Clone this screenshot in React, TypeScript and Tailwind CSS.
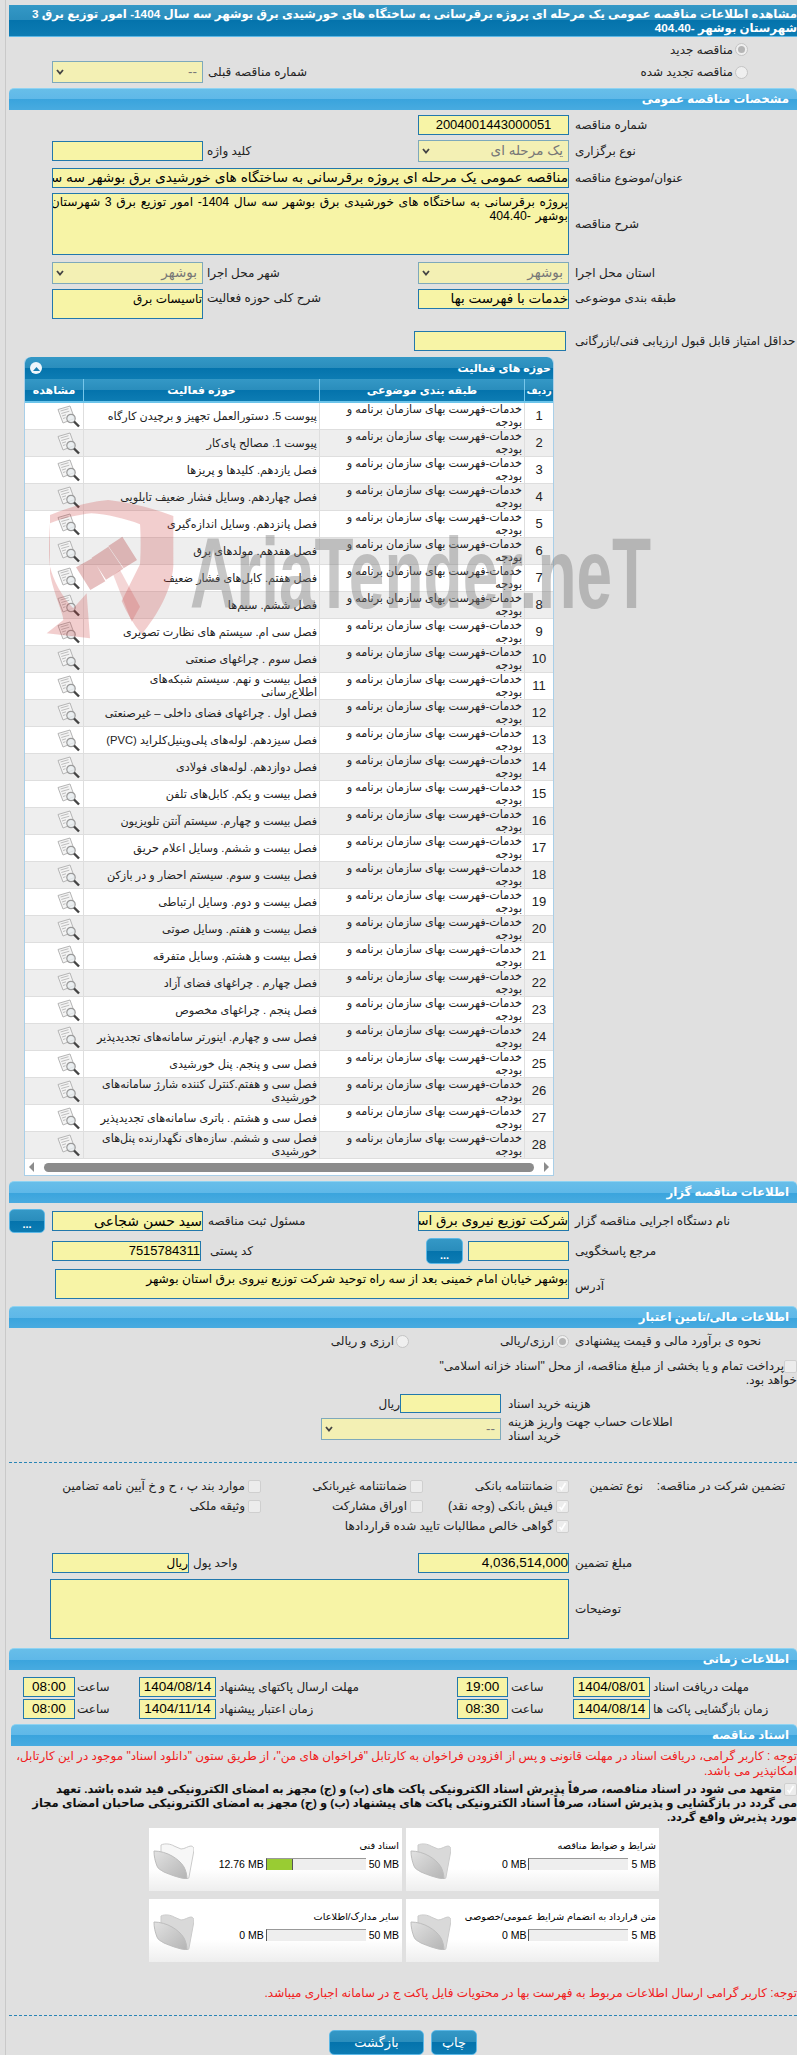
import React from "react";

const titleBg = "bg-[linear-gradient(#3498c6_0%,#2a8dbc_50%,#0473ac_50%,#0d7cb3_100%)]";
const sectionBg = "bg-[linear-gradient(#67bee9_0%,#5fb8e8_50%,#3aa4dd_50%,#48abe0_100%)]";

function Section({ children }: { children: React.ReactNode }) {
  return (
    <div className={`${sectionBg} h-[22px] rounded-t-[5px] border-t border-[#8fd3f2] pr-[8px] text-white font-bold text-[11.75px] leading-[20px]`}>
      {children}
    </div>
  );
}
function Field({ w, h = "h-[20px]", t = "text-[13.5px]", children, align = "" }: { w: string; h?: string; t?: string; children?: React.ReactNode; align?: string }) {
  return (
    <div className={`bg-[#f7f4a6] border border-[#2278ac] leading-[18px] text-black whitespace-nowrap overflow-hidden shrink-0 ${w} ${h} ${t} ${align}`}>
      {children}
    </div>
  );
}
function Chevron() {
  return (
    <svg width="8" height="6" viewBox="0 0 8 6" className="shrink-0">
      <path d="M1 1l3 3.5L7 1" fill="none" stroke="#444" strokeWidth="1.8" />
    </svg>
  );
}
function Select({ w, children }: { w: string; children?: React.ReactNode }) {
  return (
    <div className={`h-[22px] shrink-0 bg-[#f3f0b4] border border-[#7ea9bb] flex items-center justify-between pr-[5px] pl-[3px] text-[13.5px] text-[#777] ${w}`}>
      <span>{children}</span>
      <Chevron />
    </div>
  );
}
function Lbl({ w, children, pl = "pl-[6px]" }: { w: string; children?: React.ReactNode; pl?: string }) {
  return (
    <div className={`text-left text-[12px] leading-[14px] whitespace-nowrap shrink-0 text-[#222] ${w} ${pl}`}>
      {children}
    </div>
  );
}
function Radio({ checked }: { checked?: boolean }) {
  return (
    <span className="inline-flex w-[13px] h-[13px] rounded-full border border-[#c4c4c4] bg-[#efefef] items-center justify-center shrink-0">
      {checked && <span className="w-[7px] h-[7px] rounded-full bg-[#b5b5b5]" />}
    </span>
  );
}
function Check({ checked }: { checked?: boolean }) {
  return (
    <span className="inline-flex w-[13px] h-[13px] rounded-[2px] border border-[#cfcfcf] bg-[#ececec] items-center justify-center shrink-0">
      {checked && (
        <svg width="9" height="9" viewBox="0 0 9 9">
          <path d="M1.5 5l2 2.5L7.5 1" fill="none" stroke="#fff" strokeWidth="1.6" />
        </svg>
      )}
    </span>
  );
}
function Dots({ cls }: { cls: string }) {
  return (
    <div className={`${titleBg} border border-[#5db8e6] rounded-[5px] shrink-0 text-white font-bold text-[11px] flex items-end justify-center leading-[14px] pb-[1px] ${cls}`}>
      ...
    </div>
  );
}
function DocIcon() {
  return (
    <svg width="24" height="23" viewBox="0 0 24 23" className="shrink-0">
      <path d="M1 4.5L13 1l4.5 12.5L6 18z" fill="#f4f4f4" stroke="#b5b5b5" />
      <path d="M3.5 6l8-2.3M4.3 8.5l8-2.3M5 11l4-1.2M6 13.5l2.5-.8" stroke="#bdbdbd" fill="none" />
      <circle cx="14" cy="13.5" r="4.2" fill="#e9eef0" fillOpacity="0.8" stroke="#9a9a9a" strokeWidth="1.2" />
      <path d="M17 16.5l5 5" stroke="#444" strokeWidth="2.4" />
    </svg>
  );
}
function Folder({ open }: { open?: boolean }) {
  return (
    <svg width="41" height="36" viewBox="0 0 41 36" className="shrink-0">
      <defs>
        <linearGradient id="fg" x1="0" y1="0" x2="1" y2="1">
          <stop offset="0" stopColor="#e2e2e2" />
          <stop offset="1" stopColor="#b4b4b4" />
        </linearGradient>
      </defs>
      <path d="M8 2C12 0 18 1 21 3L28 6C32 6 35 3 38 3C40 3 41 5 41 7L36 34C36 36 34 36 33 35L8 20Z" fill={open ? "#f7f7f7" : "#d9d9d9"} stroke="#cbcbcb" />
      <path d="M1 8C7 8 14 10 19 13C24 16 28 19 31 24C33 28 34 32 34 36C26 35 18 32 11 29C8 27 5 26 4 23C2 18 1 13 1 8Z" fill="url(#fg)" stroke="#bdbdbd" />
    </svg>
  );
}
function Card({ title, used, max, pct, open }: { title: string; used: string; max: string; pct?: number; open?: boolean }) {
  return (
    <div className="h-[63px] bg-[linear-gradient(#ffffff_65%,#eeeeee_100%)] pr-[3px] pl-[4px] pt-[11px] flex justify-between">
      <div className="flex flex-col items-start flex-1 min-w-0">
        <div className="w-full text-right text-[9.75px] leading-[14px] text-black whitespace-nowrap">{title}</div>
        <div className="flex items-center mt-[5px] text-[10.5px] leading-[12px] text-black h-[12px] whitespace-nowrap">
          <span dir="ltr" className="ml-[3px]">{max}</span>
          <div className="w-[100px] h-[12px] bg-[#eeeeee] border-t border-l border-t-[#999] border-l-[#555] relative">
            {pct ? <div className="absolute left-0 top-0 bottom-0 bg-[#99cc33] border-r border-[#555]" style={{ width: pct + "%" }} /> : null}
          </div>
          <span dir="ltr" className="mr-[2px]">{used}</span>
        </div>
      </div>
      <div className="pt-[4px]">
        <Folder open={open} />
      </div>
    </div>
  );
}

const rows: string[][] = [
  ["پیوست 5. دستورالعمل تجهیز و برچیدن کارگاه"],
  ["پیوست 1. مصالح پای‌کار"],
  ["فصل یازدهم. کلیدها و پریزها"],
  ["فصل چهاردهم. وسایل فشار ضعیف تابلویی"],
  ["فصل پانزدهم. وسایل اندازه‌گیری"],
  ["فصل هفدهم. مولدهای برق"],
  ["فصل هفتم. کابل‌های فشار ضعیف"],
  ["فصل ششم. سیم‌ها"],
  ["فصل سی ام. سیستم های نظارت تصویری"],
  ["فصل سوم . چراغهای صنعتی"],
  ["فصل بیست و نهم. سیستم شبکه‌های", "اطلاع‌رسانی"],
  ["فصل اول . چراغهای فضای داخلی – غیرصنعتی"],
  ["فصل سیزدهم. لوله‌های پلی‌وینیل‌کلراید (PVC)"],
  ["فصل دوازدهم. لوله‌های فولادی"],
  ["فصل بیست و یکم. کابل‌های تلفن"],
  ["فصل بیست و چهارم. سیستم آنتن تلویزیون"],
  ["فصل بیست و ششم. وسایل اعلام حریق"],
  ["فصل بیست و سوم. سیستم احضار و در بازکن"],
  ["فصل بیست و دوم. وسایل ارتباطی"],
  ["فصل بیست و هفتم. وسایل صوتی"],
  ["فصل بیست و هشتم. وسایل متفرقه"],
  ["فصل چهارم . چراغهای فضای آزاد"],
  ["فصل پنجم . چراغهای مخصوص"],
  ["فصل سی و چهارم. اینورتر سامانه‌های تجدیدپذیر"],
  ["فصل سی و پنجم. پنل خورشیدی"],
  ["فصل سی و هفتم.کنترل کننده شارژ سامانه‌های", "خورشیدی"],
  ["فصل سی و هشتم . باتری سامانه‌های تجدیدپذیر"],
  ["فصل سی و ششم. سازه‌های نگهدارنده پنل‌های", "خورشیدی"],
];

function ActivityTable() {
  return (
    <div className="w-[530px] mr-[243px] mt-[6px] bg-white border-x border-b border-[#a9cfe8] rounded-t-[6px]">
      <div className={`${titleBg} h-[22px] rounded-t-[6px] flex items-center justify-between pr-[2px] pl-[5px] text-white font-bold text-[11px]`}>
        <span>حوزه های فعالیت</span>
        <span className="w-[12px] h-[12px] rounded-full bg-[#eef6fb] flex items-center justify-center">
          <svg width="7" height="5" viewBox="0 0 7 5"><path d="M0 5l3.5-4L7 5z" fill="#1c7fb2" /></svg>
        </span>
      </div>
      <div className={`${titleBg} h-[24px] flex border-b-2 border-[#6cc4ea] text-white font-bold text-[11px] leading-[22px] text-center`}>
        <div className="w-[29px] border-l border-[#77c6ea] text-[9.5px] overflow-hidden leading-[24px]">ردیف</div>
        <div className="w-[205px] border-l border-[#77c6ea]">طبقه بندی موضوعی</div>
        <div className="w-[236px] border-l border-[#77c6ea]">حوزه فعالیت</div>
        <div className="flex-1">مشاهده</div>
      </div>
      {rows.map((r, i) => (
        <div key={i} className={`h-[27px] flex border-b border-[#dedede] text-[11.2px] leading-[13px] text-[#222] whitespace-nowrap ${i % 2 ? "bg-[#eeeeee]" : "bg-white"}`}>
          <div className="w-[29px] border-l border-[#dedede] text-center text-[13px] leading-[26px]">{i + 1}</div>
          <div className="w-[205px] border-l border-[#dedede] pr-[2px] overflow-hidden">
            خدمات-فهرست بهای سازمان برنامه و<br />بودجه
          </div>
          <div className="w-[236px] border-l border-[#dedede] pr-[2px] overflow-hidden flex flex-col justify-center">
            {r.map((l, j) => (
              <div key={j}>{l}</div>
            ))}
          </div>
          <div className="flex-1 flex items-center justify-start pr-[2px]">
            <DocIcon />
          </div>
        </div>
      ))}
      <div className="h-[16px] flex items-center justify-between px-[3px] text-[#777]">
        <svg width="6" height="10" viewBox="0 0 6 10"><path d="M0 0l5 5-5 5z" fill="#8c8c8c" /></svg>
        <div className="w-[490px] h-[9px] rounded-full bg-[#8c8c8c]" />
        <svg width="6" height="10" viewBox="0 0 6 10"><path d="M6 0L1 5l5 5z" fill="#8c8c8c" /></svg>
      </div>
    </div>
  );
}

function Watermark() {
  return (
    <>
      <svg width="170" height="160" viewBox="0 0 510 480" className="absolute left-[40px] top-[490px] pointer-events-none">
        <path
          d="M30 75C90 50 150 35 205 30c70 8 135 25 195 48v150c-5 75-50 150-95 205-25-30-45-65-60-100l55-110c3-45 2-95 0-120-45-18-100-30-145-33-40 4-90 15-125 30-3 50-5 90 0 130 10 40 35 90 70 125l40-45 10 135-130-15 50-40C70 370 40 310 30 250z"
          fill="#c83232"
          fillOpacity="0.24"
        />
        <path d="M108 232l50-28 38 70-45 26zM155 203l50-33 45 66-52 33zM205 168l42-28 44 70-40 25z" fill="#b03030" fillOpacity="0.3" />
        <path d="M240 240l60 110-25 45-55-140z" fill="#c83232" fillOpacity="0.2" />
      </svg>
      <div
        dir="ltr"
        className="absolute left-[190px] top-[518px] w-[458px] h-[110px] pointer-events-none whitespace-nowrap font-bold text-[#777777] opacity-40 text-[100px] leading-[110px] origin-left scale-x-[0.64]"
      >
        AriaTender.neT
      </div>
    </>
  );
}

export default function App() {
  return (
    <div className="relative w-[797px] h-[2055px] overflow-hidden bg-[#e0e0e0] font-['Liberation_Sans','DejaVu_Sans',sans-serif] pl-[5px]">
      <div dir="rtl" className="border-l border-[#c9c9c9] pl-[3px] h-full">
        <div className="pt-[5px]">
          <div className={`${titleBg} h-[32px] text-white font-bold text-[11.75px] leading-[14px] pt-[2px] whitespace-nowrap overflow-hidden border-b border-[#5db8e6]`}>
            مشاهده اطلاعات مناقصه عمومی یک مرحله ای پروژه برقرسانی به ساختگاه های خورشیدی برق بوشهر سه سال 1404- امور توزیع برق 3
            <br />
            شهرستان بوشهر -404.40
          </div>
        </div>

        <div className="h-[23px] mt-[1px] flex items-center pr-[49px] gap-[2px] text-[12px] text-[#222]">
          <Radio checked />
          <span>مناقصه جدید</span>
        </div>
        <div className="h-[22px] flex items-center">
          <div className="w-[379px] shrink-0 flex items-center pr-[49px] gap-[2px] text-[12px] text-[#222]">
            <Radio />
            <span>مناقصه تجدید شده</span>
          </div>
          <Lbl w="w-[215px]" pl="pl-[5px]">شماره مناقصه قبلی</Lbl>
          <Select w="w-[151px]">--</Select>
        </div>

        <div className="mt-[5px]"><Section>مشخصات مناقصه عمومی</Section></div>

        <div className="mt-[5px] flex items-center">
          <Lbl w="w-[228px]">شماره مناقصه</Lbl>
          <Field w="w-[151px]" t="text-[13px]" align="text-center">2004001443000051</Field>
        </div>
        <div className="mt-[5px] flex items-center h-[22px]">
          <Lbl w="w-[228px]">نوع برگزاری</Lbl>
          <Select w="w-[151px]">یک مرحله ای</Select>
          <Lbl w="w-[215px]" pl="pl-[4px]">کلید واژه</Lbl>
          <Field w="w-[151px]" />
        </div>
        <div className="mt-[6px] flex items-center">
          <Lbl w="w-[228px]">عنوان/موضوع مناقصه</Lbl>
          <Field w="w-[517px]" t="text-[13.75px]">مناقصه عمومی یک مرحله ای پروژه برقرسانی به ساختگاه های خورشیدی برق بوشهر سه سال 1404- امور توزیع برق 3 شهرستان بوشهر</Field>
        </div>
        <div className="mt-[5px] flex items-center">
          <Lbl w="w-[228px]">شرح مناقصه</Lbl>
          <Field w="w-[517px]" h="h-[62px]" t="text-[12.25px]">
            <div className="whitespace-nowrap leading-[14px] pt-[1px] [word-spacing:1.25px]">
              پروژه برقرسانی به ساختگاه های خورشیدی برق بوشهر سه سال 1404- امور توزیع برق 3 شهرستان
              <br />
              بوشهر -404.40
            </div>
          </Field>
        </div>
        <div className="mt-[7px] flex items-center h-[22px]">
          <Lbl w="w-[228px]">استان محل اجرا</Lbl>
          <Select w="w-[151px]">بوشهر</Select>
          <Lbl w="w-[215px]" pl="pl-[4px]">شهر محل اجرا</Lbl>
          <Select w="w-[151px]">بوشهر</Select>
        </div>
        <div className="mt-[5px] flex items-start">
          <Lbl w="w-[228px]"><div className="pt-[2px]">طبقه بندی موضوعی</div></Lbl>
          <Field w="w-[151px]">خدمات با فهرست بها</Field>
          <Lbl w="w-[215px]" pl="pl-[4px]"><div className="pt-[2px]">شرح کلی حوزه فعالیت</div></Lbl>
          <Field w="w-[151px]" h="h-[30px]" t="text-[12px]">تاسیسات برق</Field>
        </div>
        <div className="mt-[12px] flex items-center">
          <Lbl w="w-[231px]" pl="pl-[9px]">حداقل امتیاز قابل قبول ارزیابی فنی/بازرگانی</Lbl>
          <Field w="w-[152px]" />
        </div>

        <ActivityTable />

        <div className="mt-[5px]"><Section>اطلاعات مناقصه گزار</Section></div>

        <div className="mt-[6px] flex items-center h-[24px]">
          <Lbl w="w-[228px]">نام دستگاه اجرایی مناقصه گزار</Lbl>
          <Field w="w-[151px]">شرکت توزیع نیروی برق استان بوشهر</Field>
          <Lbl w="w-[215px]" pl="pl-[5px]">مسئول ثبت مناقصه</Lbl>
          <Field w="w-[151px]" t="text-[14px]">سید حسن شجاعی</Field>
          <div className="w-[7px] shrink-0" />
          <Dots cls="w-[36px] h-[24px]" />
        </div>
        <div className="mt-[5px] flex items-center h-[26px]">
          <Lbl w="w-[228px]">مرجع پاسخگویی</Lbl>
          <Field w="w-[101px]" />
          <div className="w-[5px] shrink-0" />
          <Dots cls="w-[37px] h-[26px]" />
          <Lbl w="w-[225px]" pl="pl-[9px]">کد پستی</Lbl>
          <Field w="w-[149px]" t="text-[13px]">7515784311</Field>
        </div>
        <div className="mt-[5px] flex items-center">
          <Lbl w="w-[228px]"><div className="pt-[4px]">آدرس</div></Lbl>
          <Field w="w-[514px]" h="h-[30px]" t="text-[12.25px]">بوشهر خیابان امام خمینی بعد از سه راه توحید شرکت توزیع نیروی برق استان بوشهر</Field>
        </div>

        <div className="mt-[7px]"><Section>اطلاعات مالی/تامین اعتبار</Section></div>

        <div className="mt-[2px] h-[22px] flex items-center text-[12px] text-[#222]">
          <Lbl w="w-[228px]">نحوه ی برآورد مالی و قیمت پیشنهادی</Lbl>
          <div className="w-[160px] shrink-0 flex items-center gap-[2px]"><Radio checked /><span>ارزی/ریالی</span></div>
          <div className="flex items-center gap-[2px]"><Radio /><span>ارزی و ریالی</span></div>
        </div>
        <div className="mt-[7px] h-[28px] text-[12px] leading-[14px] text-[#222] whitespace-nowrap">
          <div className="flex items-center">
            <Check />
            <span>پرداخت تمام و یا بخشی از مبلغ مناقصه، از محل "اسناد خزانه اسلامی"</span>
          </div>
          <div>خواهد بود.</div>
        </div>
        <div className="mt-[7px] flex items-center">
          <Lbl w="w-[296px]" pl="pl-[7px]">هزینه خرید اسناد</Lbl>
          <Field w="w-[101px]" h="h-[19px]" />
          <span className="text-[12px] text-[#222]">ریال</span>
        </div>
        <div className="mt-[5px] flex items-center h-[22px]">
          <Lbl w="w-[296px]" pl="pl-[7px]">
            اطلاعات حساب جهت واریز هزینه
            <br />
            خرید اسناد
          </Lbl>
          <Select w="w-[180px]">--</Select>
        </div>

        <div className="mt-[22px] border-t border-dashed border-[#2a85b5]" />

        <div className="mt-[13px] flex items-start text-[12px] leading-[20px] text-[#222] whitespace-nowrap">
          <div className="w-[154px] shrink-0 pr-[12px]">تضمین شرکت در مناقصه:</div>
          <div className="w-[74px] shrink-0">نوع تضمین</div>
          <div className="grid grid-cols-[146px_162px_1fr] auto-rows-[20px]">
            <div className="flex items-center gap-[3px]"><Check checked /><span>ضمانتنامه بانکی</span></div>
            <div className="flex items-center gap-[3px]"><Check /><span>ضمانتنامه غیربانکی</span></div>
            <div className="flex items-center gap-[3px]"><Check /><span>موارد بند پ ، ح و خ آیین نامه تضامین</span></div>
            <div className="flex items-center gap-[3px]"><Check checked /><span>فیش بانکی (وجه نقد)</span></div>
            <div className="flex items-center gap-[3px]"><Check /><span>اوراق مشارکت</span></div>
            <div className="flex items-center gap-[3px]"><Check /><span>وثیقه ملکی</span></div>
            <div className="flex items-center gap-[3px] col-span-3"><Check checked /><span>گواهی خالص مطالبات تایید شده قراردادها</span></div>
          </div>
        </div>

        <div className="mt-[17px] flex items-center">
          <Lbl w="w-[228px]">مبلغ تضمین</Lbl>
          <Field w="w-[151px]" t="text-[13.5px]" align="text-right">4,036,514,000</Field>
          <Lbl w="w-[229px]" pl="pl-[4px]">واحد پول</Lbl>
          <Field w="w-[137px]" t="text-[12px]">ریال</Field>
        </div>
        <div className="mt-[6px] flex items-center">
          <Lbl w="w-[228px]">توضیحات</Lbl>
          <Field w="w-[519px]" h="h-[60px]" />
        </div>

        <div className="mt-[9px]"><Section>اطلاعات زمانی</Section></div>

        {[
          ["مهلت دریافت اسناد", "1404/08/01", "19:00", "مهلت ارسال پاکتهای پیشنهاد", "1404/08/14", "08:00"],
          ["زمان بازگشایی پاکت ها", "1404/08/14", "08:30", "زمان اعتبار پیشنهاد", "1404/11/14", "08:00"],
        ].map((r, i) => (
          <div key={i} className={`flex items-center ${i ? "mt-[2px]" : "mt-[7px]"}`}>
            <Lbl w="w-[147px]" pl="pl-[3px]">{r[0]}</Lbl>
            <Field w="w-[77px]" align="text-center">{r[1]}</Field>
            <Lbl w="w-[65px]" pl="pl-[3px]">ساعت</Lbl>
            <Field w="w-[51px]" align="text-center">{r[2]}</Field>
            <Lbl w="w-[241px]" pl="pl-[3px]">{r[3]}</Lbl>
            <Field w="w-[77px]" align="text-center">{r[4]}</Field>
            <Lbl w="w-[64px]" pl="pl-[2px]">ساعت</Lbl>
            <Field w="w-[52px]" align="text-center">{r[5]}</Field>
          </div>
        ))}

        <div className="mt-[5px] ml-[2px]"><Section>اسناد مناقصه</Section></div>

        <div className="mt-[3px] text-[12px] leading-[15px] text-[#f02020] whitespace-nowrap">
          توجه : کاربر گرامی، دریافت اسناد در مهلت قانونی و پس از افزودن فراخوان به کارتابل "فراخوان های من"، از طریق ستون "دانلود اسناد" موجود در این کارتابل،
          <br />
          امکانپذیر می باشد.
        </div>
        <div className="mt-[3px] text-[11.5px] leading-[14px] font-bold text-[#111] whitespace-nowrap">
          <div className="flex items-center gap-[2px]">
            <Check checked />
            <span>متعهد می شود در اسناد مناقصه، صرفاً پذیرش اسناد الکترونیکی پاکت های (ب) و (ج) مجهز به امضای الکترونیکی قید شده باشد. تعهد</span>
          </div>
          <div>می گردد در بازگشایی و پذیرش اسناد، صرفاً اسناد الکترونیکی پاکت های پیشنهاد (ب) و (ج) مجهز به امضای الکترونیکی صاحبان امضای مجاز</div>
          <div>مورد پذیرش واقع گردد.</div>
        </div>

        <div className="mt-[4px] mr-[138px] w-[510px] grid grid-cols-2 gap-x-[4px] gap-y-[8px]">
          <Card title="شرایط و ضوابط مناقصه" used="0 MB" max="5 MB" />
          <Card title="اسناد فنی" used="12.76 MB" max="50 MB" pct={27} open />
          <Card title="متن قرارداد به انضمام شرایط عمومی/خصوصی" used="0 MB" max="5 MB" />
          <Card title="سایر مدارک/اطلاعات" used="0 MB" max="50 MB" />
        </div>

        <div className="mt-[24px] text-[12px] leading-[14px] text-[#f02020] whitespace-nowrap">
          توجه: کاربر گرامی ارسال اطلاعات مربوط به فهرست بها در محتویات فایل پاکت ج در سامانه اجباری میباشد.
        </div>

        <div className="mt-[15px] border-t border-dashed border-[#2a85b5]" />

        <div className="mt-[14px] mr-[320px] flex gap-[7px] text-white text-[13px]">
          <div className={`${titleBg} w-[46px] h-[25px] rounded-[5px] border border-[#5db8e6] flex items-center justify-center`}>چاپ</div>
          <div className={`${titleBg} w-[95px] h-[25px] rounded-[5px] border border-[#5db8e6] flex items-center justify-center`}>بازگشت</div>
        </div>
      </div>
      <Watermark />
    </div>
  );
}
